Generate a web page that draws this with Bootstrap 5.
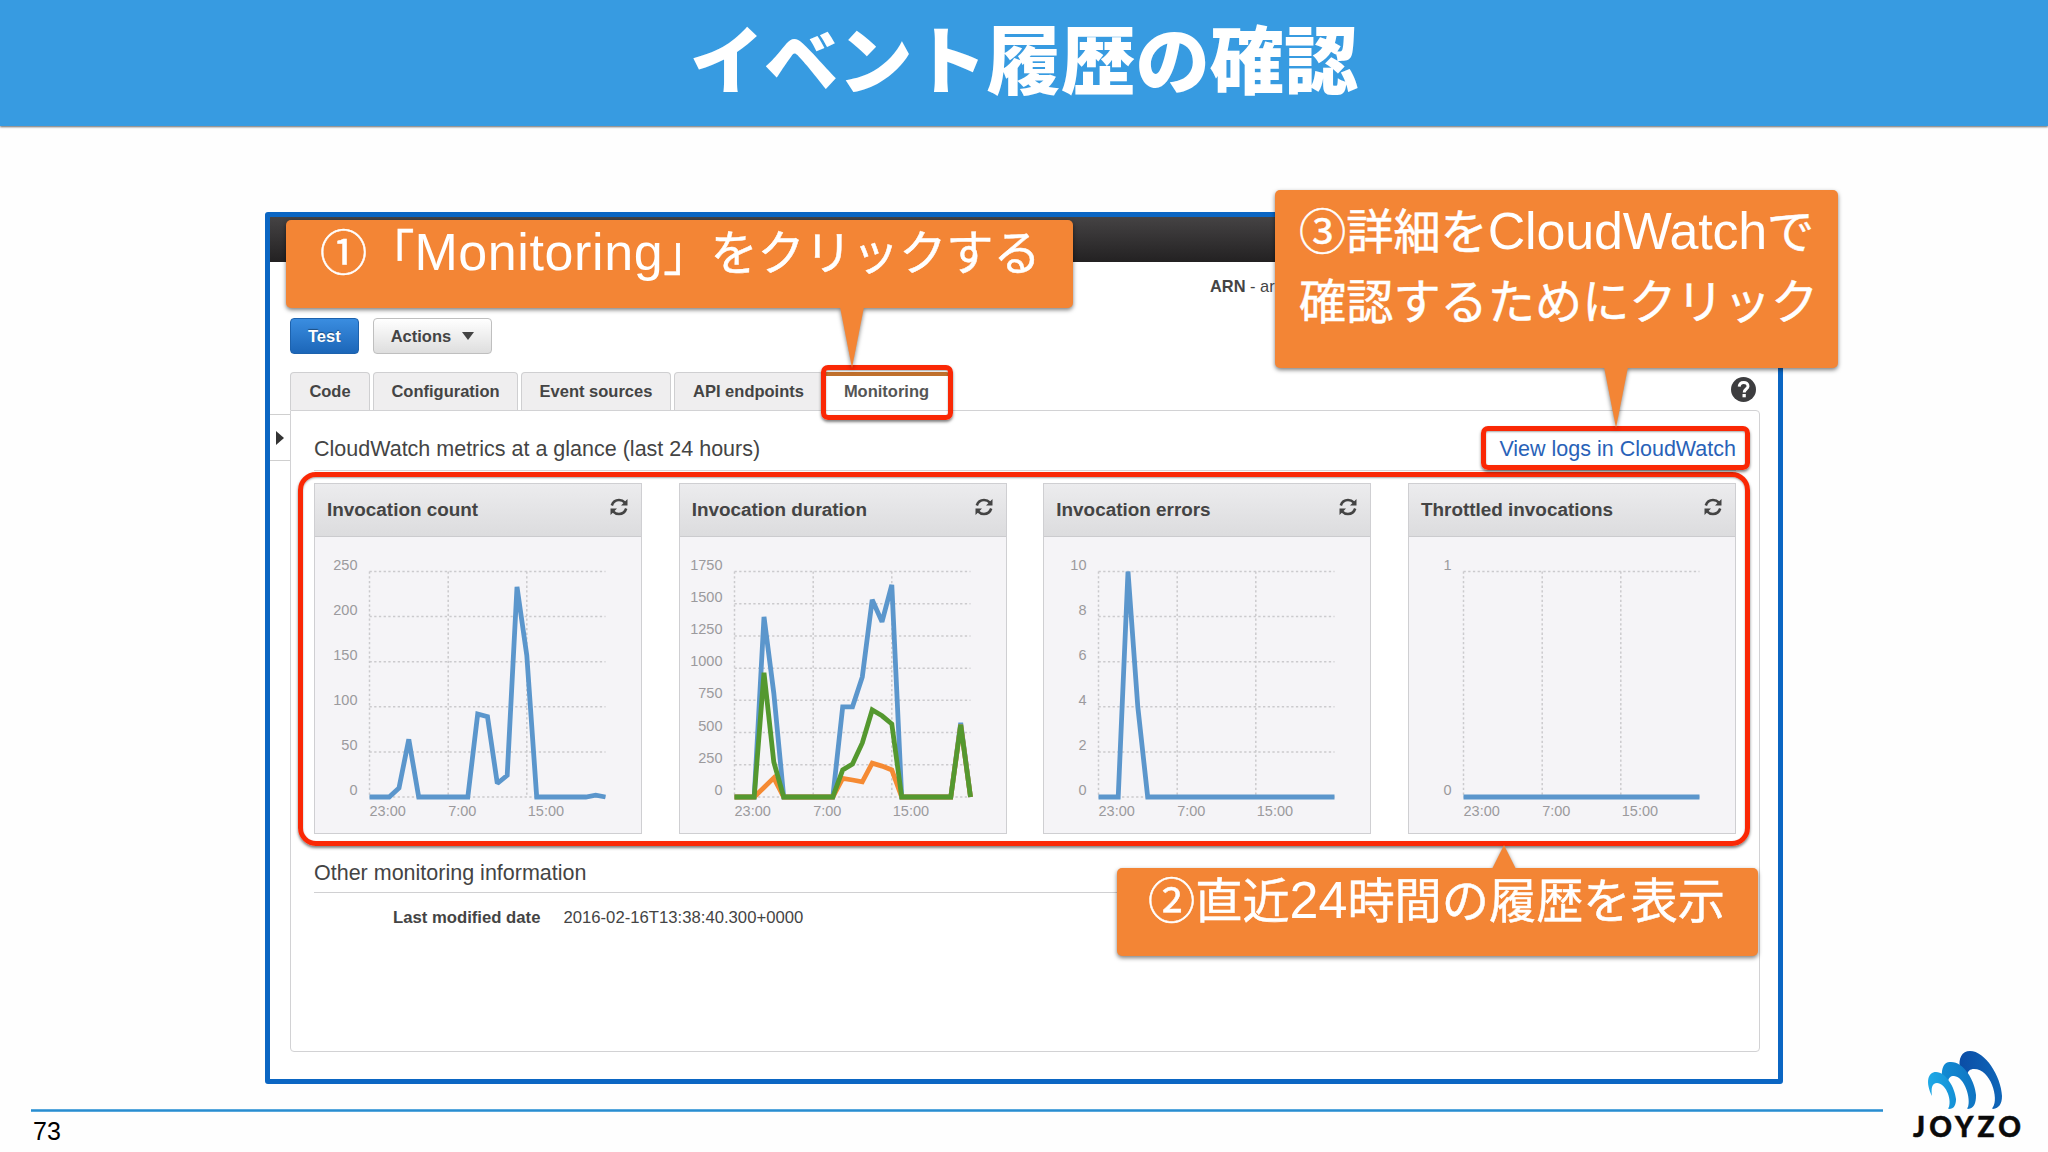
<!DOCTYPE html>
<html lang="ja">
<head>
<meta charset="utf-8">
<meta name="viewport" content="width=device-width, initial-scale=1">
<title>イベント履歴の確認</title>
<link rel="stylesheet" href="https://cdn.jsdelivr.net/npm/bootstrap@5.3.0/dist/css/bootstrap.min.css">
<style>
body{font-family:"Liberation Sans","Noto Sans CJK JP",sans-serif;color:#444;background:#fefefe}
.slide{width:2048px;height:1152px;overflow:hidden}
.slide-head{height:126px;background:#379be1;box-shadow:0 1px 2px rgba(0,0,0,.6)}
.slide-head h1{font:900 74.3px/112px "Noto Sans CJK JP",sans-serif;color:#fff}
.console{width:1518px;height:872px;margin:86px 0 0 265px;border:5px solid #0b66c3;border-radius:3px;background:#fff}
.topbar{height:45px;background:linear-gradient(#454344,#232122)}
.arn-row{height:56px;padding:12px 0 0 940px;font-size:16.4px}
.tools{padding-left:20px;gap:14px}
.tools .btn{height:36px;font-size:16.5px;font-weight:700;line-height:1;border-radius:4px;padding:0 17px}
.btn-test{background:linear-gradient(#3a8de0,#1c66b8);border:1px solid #1d62ad;color:#fff;text-shadow:0 -1px 1px rgba(0,0,0,.4)}
.btn-act{background:linear-gradient(#fff,#dedede);border:1px solid #bfbfbf;color:#444}
.tri-down{border:6px solid transparent;border-top:8px solid #444;border-bottom:0;margin-left:11px}
.tab-row{margin-top:18px;padding-left:20px;gap:3px;height:38px}
.tab-item{background:#efeeef;border:1px solid #cfcfd1;border-bottom:0;border-radius:4px 4px 0 0;font-size:16.5px;font-weight:700;height:38px}
.tab-item.current{background:#fff;height:39px;border-top:4px solid #c0702c;margin-left:-3px;color:#555;padding-bottom:5px}
.help{width:25px;height:25px;margin:5px 22px 0 auto}
.side{width:20px;height:47px;margin-top:4px;border-top:1px solid #cfcfcf;border-bottom:1px solid #cfcfcf}
.tri-right{border:7px solid transparent;border-left:8px solid #333;border-right:0}
.panel{width:1470px;height:642px;border:1px solid #d2d2d4;border-radius:0 4px 4px 4px;padding:0 23px 0 23px}
.sec-title{font-size:21.5px;line-height:26px}
.glance{height:60px;padding-top:17px;border-bottom:1px solid #d5d5d7}
.glance a{color:#2962b8}
.metric{width:328px;height:351px;border:1px solid #cfcfd2;background:#f5f4f7}
.metric-head{height:53px;padding:0 13px 0 12px;background:linear-gradient(#ececee,#dcdcde);border-bottom:1px solid #cbcbce}
.metric-head b{font-size:18.9px}
.metric svg text{font-size:14.5px;fill:#9b9a9d}
.other{height:59px;padding-top:19px;border-bottom:1px solid #d0d0d2}
.mod{font-size:16.7px;padding:12px 0 0 79px;gap:23px}
.foot-rule{height:3px;width:1852px;margin:25px 0 0 31px;background:linear-gradient(#6fb6e4,#2a8dcf,#6fb6e4)}
.page-no{font-size:25px;line-height:28px;color:#000;margin:5px 0 0 33px}
.joyzo{right:20px;bottom:9px}
.joyzo text{font:900 28px Lato,sans-serif;fill:#0a0a0a;stroke:#0a0a0a;stroke-width:.5px}
/* annotations lying over the console */
.mark-box{border:5px solid #fa2805;border-radius:7px;box-shadow:0 2px 3px rgba(0,0,0,.5),inset 0 1px 2px rgba(0,0,0,.35)}
.m1{left:821px;top:365px;width:132px;height:55px}
.m2{left:1481px;top:426px;width:269px;height:44px}
.m3{left:298px;top:472px;width:1452px;height:374px;border-radius:18px}
.callout{background:#f38535;border-radius:5px;color:#fff;font:400 47.2px/70px "Noto Sans CJK JP",sans-serif;white-space:nowrap;filter:drop-shadow(0 2px 2px rgba(0,0,0,.5));-webkit-text-stroke:.5px #fff}
.callout i{font:normal 52px/1 "Liberation Sans",sans-serif;-webkit-text-stroke:0}
.callout::after{content:"";position:absolute;width:24px;background:#f38535}
.c1{left:286px;top:220px;width:787px;height:88px;padding:0 0 0 34px;line-height:60px}
.c1 i{letter-spacing:.6px}
.c1::after{left:554px;top:87px;height:61px;clip-path:polygon(0 0,100% 0,50% 100%)}
.c3{left:1275px;top:190px;width:563px;height:178px;padding:4px 0 0 24px}
.c3 i{letter-spacing:-.2px}
.c3::after{left:329px;top:177px;height:61px;clip-path:polygon(0 0,100% 0,50% 100%)}
.c2{left:1117px;top:868px;width:641px;height:88px;padding:0 0 0 31px;line-height:59px}
.c2::after{left:375px;top:-23px;height:24px;clip-path:polygon(50% 0,100% 100%,0 100%)}
</style>
</head>
<body>
<div class="slide position-relative d-flex flex-column align-items-start">
  <header class="slide-head w-100 text-center flex-shrink-0"><h1 class="m-0">イベント履歴の確認</h1></header>

  <main class="console flex-shrink-0">
    <div class="topbar"></div>
    <div class="arn-row"><b>ARN</b> - arn</div>
    <div class="tools d-flex">
      <button class="btn btn-test">Test</button>
      <button class="btn btn-act d-flex align-items-center">Actions<span class="tri-down"></span></button>
    </div>
    <div class="tab-row d-flex">
      <div class="tab-item d-flex align-items-center justify-content-center" style="width:80px">Code</div>
      <div class="tab-item d-flex align-items-center justify-content-center" style="width:145px">Configuration</div>
      <div class="tab-item d-flex align-items-center justify-content-center" style="width:150px">Event sources</div>
      <div class="tab-item d-flex align-items-center justify-content-center" style="width:149px">API endpoints</div>
      <div class="tab-item current d-flex align-items-center justify-content-center" style="width:127px">Monitoring</div>
      <svg class="help" viewBox="0 0 25 25"><circle cx="12.5" cy="12.5" r="12.5" fill="#3d3d3f"/><path d="M8.2 9.6C8.4 6.8 10.2 5.4 12.7 5.4S17 7 17 9.3C17 12 13.2 12.1 13.2 15.4" fill="none" stroke="#fff" stroke-width="3"/><rect x="11.5" y="17" width="3.3" height="3.3" fill="#fff"/></svg>
    </div>
    <div class="d-flex">
      <div class="side d-flex align-items-center justify-content-center"><span class="tri-right"></span></div>
      <section class="panel">
        <div class="glance d-flex justify-content-between align-items-center sec-title bg-white">
          <span>CloudWatch metrics at a glance (last 24 hours)</span>
          <a class="text-decoration-none" href="#">View logs in CloudWatch</a>
        </div>
        <div class="d-flex justify-content-between pt-2 mt-1" id="metrics"></div>
        <div class="other sec-title d-flex align-items-center">Other monitoring information</div>
        <div class="mod d-flex"><b>Last modified date</b><span>2016-02-16T13:38:40.300+0000</span></div>
      </section>
    </div>
  </main>

  <div class="foot-rule flex-shrink-0"></div>
  <div class="page-no">73</div>

  <svg class="joyzo position-absolute" width="120" height="105" viewBox="0 0 120 105">
    <defs>
      <linearGradient id="ga"><stop offset="0" stop-color="#1fa9e6"/><stop offset="1" stop-color="#1490d6"/></linearGradient>
      <linearGradient id="gb"><stop offset="0" stop-color="#128bd3"/><stop offset="1" stop-color="#0f74c2"/></linearGradient>
      <linearGradient id="gc"><stop offset="0" stop-color="#0b4da6"/><stop offset="1" stop-color="#0f66b8"/></linearGradient>
    </defs>
    <path d="M52 31C50 20 54 13 62 13C77 13 93 38 94 58C94 66 91 70 85 71C84 71 84 70 85 69C91 61 83 31 66 31C62 31 60 33 59 37C57 35 54 33 52 31Z" fill="url(#gc)"/>
    <path d="M34 39C33 29 37 23 43 24C56 24 67 43 68 57C68 66 66 70 60 71C59 71 59 70 60 69C63 61 57 39 46 38C42 38 41 40 40 43C38 41 36 40 34 39Z" fill="url(#gb)"/>
    <path d="M24 58C17 44 20 34 28 34C38 34 47 50 48 61C48 67 46 71 41 71C40 71 40 70 41 69C44 60 37 45 29 45C24 45 23 50 24 58Z" fill="url(#ga)"/>
    <text x="5" y="99" textLength="108" lengthAdjust="spacing">JOYZO</text>
  </svg>

  <div class="mark-box m3 position-absolute"></div>
  <div class="mark-box m1 position-absolute"></div>
  <div class="mark-box m2 position-absolute"></div>
  <div class="callout c1 position-absolute">①「<i>Monitoring</i>」をクリックする</div>
  <div class="callout c3 position-absolute">③詳細を<i>CloudWatch</i>で<br>確認するためにクリック</div>
  <div class="callout c2 position-absolute">②直近<i>24</i>時間の履歴を表示</div>
</div>

<script>
const BLUE = '#5b96cc', GREEN = '#54982f', ORANGE = '#f58a33';
const zeros = n => Array(n).fill(0);
const charts = [
  {title: 'Invocation count', max: 250, step: 50, series: [
    [BLUE, [0,0,0,10,64,0,0,0,0,0,0,92,89,15,24,233,157,0,0,0,0,0,0,2,0]]]},
  {title: 'Invocation duration', max: 1750, step: 250, series: [
    [BLUE, [0,0,0,1398,806,0,0,0,0,0,0,700,700,932,1530,1360,1646,0,0,0,0,0,0,575,0]],
    [ORANGE, [0,0,0,74,148,0,0,0,0,0,0,145,132,118,262,240,210,0,0,0,0,0,0,560,0]],
    [GREEN, [0,0,0,965,272,0,0,0,0,0,0,210,256,419,675,630,567,0,0,0,0,0,0,560,0]]]},
  {title: 'Invocation errors', max: 10, step: 2, series: [
    [BLUE, [0,0,0,10,4].concat(zeros(20))]]},
  {title: 'Throttled invocations', max: 1, step: 1, series: [
    [BLUE, zeros(25)]]}
];
const L = 54.5, R = 290.5, T = 34.5, B = 260;
const refresh = '<svg width="18" height="18" viewBox="0 0 18 18" style="margin-top:-6px"><g fill="none" stroke="#444" stroke-width="2.6"><path d="M1.8 7.5C3 3.8 6 2 9 2C11.4 2 13.4 3 15 4.7"/><path d="M16.2 10.5C15 14.2 12 16 9 16C6.6 16 4.6 15 3 13.3"/></g><path d="M17.5 1V7.5H11Z M.5 17V10.5H7Z" fill="#444"/></svg>';
document.getElementById('metrics').innerHTML = charts.map(c => {
  const y = v => B - v / c.max * (B - T);
  let s = '';
  for (let v = 0; v <= c.max; v += c.step) {
    s += `<path d="M${L} ${y(v)}H${R}" stroke="#cbcacd" stroke-width="1.5" stroke-dasharray="2.3 2.4"/>`;
    s += `<text x="${L - 12}" y="${y(v) - 2}" text-anchor="end">${v}</text>`;
  }
  [['23:00', 0], ['7:00', 78.7], ['15:00', 157.3]].forEach(([t, dx], i) => {
    s += `<path d="M${L + dx} ${T}V${B}" stroke="#cbcacd" stroke-width="1.5" stroke-dasharray="2.3 2.4"/>`;
    s += `<text x="${L + dx + (i == 2 ? 1 : 0)}" y="${B + 19}">${t}</text>`;
  });
  c.series.forEach(([col, d]) => {
    s += `<polyline fill="none" stroke="${col}" stroke-width="4.8" stroke-miterlimit="2" points="${d.map((v, i) => (L + i * (R - L) / 24).toFixed(1) + ',' + y(v).toFixed(1)).join(' ')}"/>`;
  });
  return `<article class="metric"><div class="metric-head d-flex align-items-center justify-content-between"><b>${c.title}</b>${refresh}</div><svg class="d-block" width="326" height="294">${s}</svg></article>`;
}).join('');
</script>
<script src="https://cdn.jsdelivr.net/npm/bootstrap@5.3.0/dist/js/bootstrap.bundle.min.js"></script>
</body>
</html>
